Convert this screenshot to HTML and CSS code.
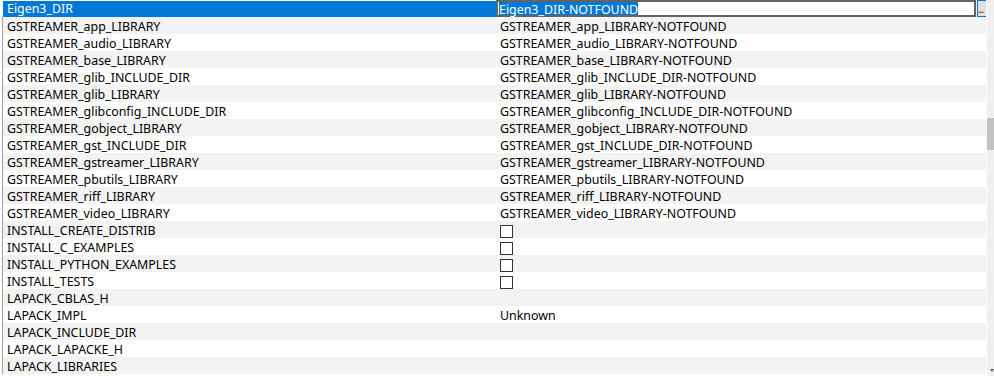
FILE: index.html
```html
<!DOCTYPE html>
<html lang="en">
<head>
    <meta charset="UTF-8">
    <title>CMake Cache Entries</title>
    <link rel="stylesheet" href="styles.css">
</head>
<body>
    <div class="view">
        <div class="table">
            <div class="row selected">
                <div class="name">Eigen3_DIR</div>
                <div class="value editor">
                    <div class="edit-box"><span class="sel">Eigen3_DIR-NOTFOUND</span></div>
                    <div class="browse">...</div>
                </div>
            </div>
            <div class="row"><div class="name">GSTREAMER_app_LIBRARY</div><div class="value">GSTREAMER_app_LIBRARY-NOTFOUND</div></div>
            <div class="row"><div class="name">GSTREAMER_audio_LIBRARY</div><div class="value">GSTREAMER_audio_LIBRARY-NOTFOUND</div></div>
            <div class="row"><div class="name">GSTREAMER_base_LIBRARY</div><div class="value">GSTREAMER_base_LIBRARY-NOTFOUND</div></div>
            <div class="row"><div class="name">GSTREAMER_glib_INCLUDE_DIR</div><div class="value">GSTREAMER_glib_INCLUDE_DIR-NOTFOUND</div></div>
            <div class="row"><div class="name">GSTREAMER_glib_LIBRARY</div><div class="value">GSTREAMER_glib_LIBRARY-NOTFOUND</div></div>
            <div class="row"><div class="name">GSTREAMER_glibconfig_INCLUDE_DIR</div><div class="value">GSTREAMER_glibconfig_INCLUDE_DIR-NOTFOUND</div></div>
            <div class="row"><div class="name">GSTREAMER_gobject_LIBRARY</div><div class="value">GSTREAMER_gobject_LIBRARY-NOTFOUND</div></div>
            <div class="row"><div class="name">GSTREAMER_gst_INCLUDE_DIR</div><div class="value">GSTREAMER_gst_INCLUDE_DIR-NOTFOUND</div></div>
            <div class="row"><div class="name">GSTREAMER_gstreamer_LIBRARY</div><div class="value">GSTREAMER_gstreamer_LIBRARY-NOTFOUND</div></div>
            <div class="row"><div class="name">GSTREAMER_pbutils_LIBRARY</div><div class="value">GSTREAMER_pbutils_LIBRARY-NOTFOUND</div></div>
            <div class="row"><div class="name">GSTREAMER_riff_LIBRARY</div><div class="value">GSTREAMER_riff_LIBRARY-NOTFOUND</div></div>
            <div class="row"><div class="name">GSTREAMER_video_LIBRARY</div><div class="value">GSTREAMER_video_LIBRARY-NOTFOUND</div></div>
            <div class="row"><div class="name">INSTALL_CREATE_DISTRIB</div><div class="value"><span class="check"></span></div></div>
            <div class="row"><div class="name">INSTALL_C_EXAMPLES</div><div class="value"><span class="check"></span></div></div>
            <div class="row"><div class="name">INSTALL_PYTHON_EXAMPLES</div><div class="value"><span class="check"></span></div></div>
            <div class="row"><div class="name">INSTALL_TESTS</div><div class="value"><span class="check"></span></div></div>
            <div class="row"><div class="name">LAPACK_CBLAS_H</div><div class="value"></div></div>
            <div class="row"><div class="name">LAPACK_IMPL</div><div class="value">Unknown</div></div>
            <div class="row"><div class="name">LAPACK_INCLUDE_DIR</div><div class="value"></div></div>
            <div class="row"><div class="name">LAPACK_LAPACKE_H</div><div class="value"></div></div>
            <div class="row"><div class="name">LAPACK_LIBRARIES</div><div class="value"></div></div>
        </div>
        <div class="scrollbar">
            <div class="thumb"></div>
            <div class="arrow"></div>
        </div>
    </div>
</body>
</html>
```

FILE: styles.css
```css
:root {
    --select: #0078d7;
    --stripe: #f3f3f3;
    --text: #000000;
    --scroll-bg: #f0f0f0;
    --thumb: #c2c2c2;
}

* {
    margin: 0;
    padding: 0;
    box-sizing: border-box;
}

body {
    font-family: "Noto Sans", "Liberation Sans", sans-serif;
    font-size: 12.4px;
    color: var(--text);
    background: #ffffff;
    width: 994px;
    height: 376px;
    overflow: hidden;
}

.view {
    display: flex;
    height: 376px;
}

.table {
    width: 986px;
    padding-left: 2px;
    margin-right: 1px;
    overflow: hidden;
}

.row {
    display: grid;
    grid-template-columns: 493px 1fr;
    height: 17px;
    line-height: 17px;
    border-left: 1px solid #a0a0a0;
    white-space: nowrap;
}

.row:nth-child(even) {
    background: var(--stripe);
}

.name {
    padding-left: 4px;
    padding-top: 1px;
}

.value {
    padding-left: 4px;
    padding-top: 1px;
    display: flex;
    align-items: flex-start;
}

.row.selected {
    border-left-color: #ffffff;
}

.row.selected .name {
    background: var(--select);
    color: #ffffff;
    margin-top: 1px;
    padding-top: 0;
    line-height: 16px;
}

.value.editor {
    padding: 0;
    background: #ffffff;
}

.edit-box {
    flex: 1;
    height: 17px;
    border: 2px solid #646464;
    padding-left: 1px;
    display: flex;
    align-items: flex-start;
}

.sel {
    display: inline-block;
    background: var(--select);
    color: #ffffff;
    height: 13px;
    line-height: 15px;
}

.browse {
    width: 9px;
    height: 17px;
    margin-left: 1px;
    border: 1px solid var(--select);
    border-right: none;
    background: #e1e1e1;
    font-size: 10px;
    line-height: 16px;
    letter-spacing: -1px;
    overflow: hidden;
    color: #5a1a1a;
}

.check {
    width: 13px;
    height: 13px;
    margin-top: 3px;
    border: 1px solid #333333;
    background: #ffffff;
}

.scrollbar {
    width: 7px;
    background: var(--scroll-bg);
    padding-top: 118px;
    display: flex;
    flex-direction: column;
}

.thumb {
    height: 32px;
    background: var(--thumb);
}

.arrow {
    margin-top: auto;
    margin-bottom: 4px;
    margin-left: 3px;
    width: 0;
    height: 0;
    border-left: 2px solid transparent;
    border-right: 2px solid transparent;
    border-top: 3px solid #606060;
}
```
